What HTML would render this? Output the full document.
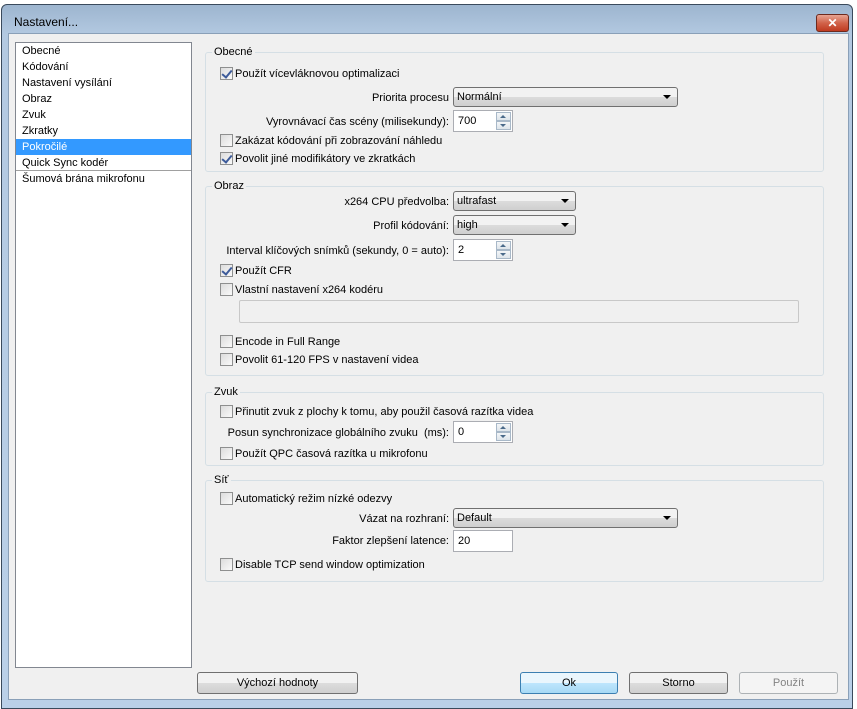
<!DOCTYPE html>
<html><head><meta charset="utf-8"><style>
*{box-sizing:border-box}
body{margin:0;width:857px;height:709px;background:#fff;position:relative;overflow:hidden;font-family:"Liberation Sans",sans-serif;font-size:11px;color:#000}
.a{position:absolute}
.win{left:1px;top:4px;width:852px;height:705px;border:1px solid #3a4a5c;border-radius:6px 6px 0 0;background:linear-gradient(#9db5cf,#b3c9e1 30px,#bad0e8)}
.client{left:8px;top:33px;width:841px;height:667px;background:#f0f0f0;border:1px solid #8aa0b8}
.t{position:absolute;white-space:nowrap;line-height:13px;margin-top:1px}
.r{text-align:right}
.list{left:15px;top:42px;width:177px;height:626px;background:#fff;border:1px solid #828790}
.grp{position:absolute;left:205px;width:619px;border:1px solid #d5dfe5;border-radius:3px}
.gl{position:absolute;background:#f0f0f0;padding:0 2px;left:212px}
.cb{position:absolute;left:220px;width:13px;height:13px;border:1px solid #8e8f8f;background:linear-gradient(135deg,#dcdcdc,#fafafa)}
.cb.c::after{content:"";position:absolute;left:3px;top:0px;width:4px;height:8px;border:solid #3d5b9a;border-width:0 2px 2px 0;transform:rotate(40deg)}
.dd{position:absolute;left:453px;height:20px;border:1px solid #707070;border-radius:3px;background:linear-gradient(#f2f2f2 50%,#dcdcdc 50%,#cfcfcf);padding:3px 3px 0}
.dd::after{content:"";position:absolute;right:6px;top:7px;border:4px solid transparent;border-top:4px solid #000;border-bottom:0}
.sp{position:absolute;left:453px;width:60px;height:22px;border:1px solid #abadb3;background:#fff;padding:4px 4px 0}
.sp i{position:absolute;right:1px;width:15px;height:9px;border:1px solid #a8b8c8;background:linear-gradient(#f4f6f8,#dde4ea)}
.sp i::after{content:"";position:absolute;left:3px;top:2px;border:3px solid transparent}
.sp i.u::after{border-bottom:3px solid #4a6a8a;border-top:0}
.sp i.d::after{border-top:3px solid #4a6a8a;border-bottom:0}
.btn{position:absolute;top:672px;height:22px;border:1px solid #707070;border-radius:3px;background:linear-gradient(#f2f2f2 50%,#dddddd 50%,#cfcfcf);text-align:center;line-height:21px}
</style></head><body>
<div class="a win"></div>
<div class="t" style="left:14px;top:15px;font-size:12px">Nastavení...</div>
<div class="a" style="left:816px;top:14px;width:33px;height:18px;border:1px solid #6d2a1e;border-radius:3px;background:linear-gradient(#e7a493,#d1634a 50%,#bf3b20);color:#fff;text-align:center;font-weight:bold;font-size:12px;line-height:16px">✕</div>
<div class="a client"></div>
<div class="a list"></div>
<div class="a" style="left:16px;top:139px;width:175px;height:16px;background:#3399ff"></div>
<div class="a" style="left:16px;top:170px;width:175px;height:1px;background:#a0a0a0"></div>
<div class="t" style="left:22px;top:44px">Obecné</div>
<div class="t" style="left:22px;top:60px">Kódování</div>
<div class="t" style="left:22px;top:76px">Nastavení vysílání</div>
<div class="t" style="left:22px;top:92px">Obraz</div>
<div class="t" style="left:22px;top:108px">Zvuk</div>
<div class="t" style="left:22px;top:124px">Zkratky</div>
<div class="t" style="left:22px;top:140px;color:#fff">Pokročilé</div>
<div class="t" style="left:22px;top:156px">Quick Sync kodér</div>
<div class="t" style="left:22px;top:172px">Šumová brána mikrofonu</div>

<div class="grp" style="top:52px;height:120px"></div><div class="t gl" style="top:45px">Obecné</div>
<div class="grp" style="top:186px;height:190px"></div><div class="t gl" style="top:179px">Obraz</div>
<div class="grp" style="top:392px;height:74px"></div><div class="t gl" style="top:385px">Zvuk</div>
<div class="grp" style="top:480px;height:102px"></div><div class="t gl" style="top:473px">Síť</div>

<div class="cb c" style="top:67px"></div><div class="t" style="left:235px;top:67px">Použít vícevláknovou optimalizaci</div>
<div class="t r" style="right:408px;top:91px">Priorita procesu</div>
<div class="dd" style="top:87px;width:225px">Normální</div>
<div class="t r" style="right:408px;top:115px">Vyrovnávací čas scény (milisekundy):</div>
<div class="sp" style="top:110px">700<i class="u" style="top:1px"></i><i class="d" style="top:10px"></i></div>
<div class="cb" style="top:134px"></div><div class="t" style="left:235px;top:134px">Zakázat kódování při zobrazování náhledu</div>
<div class="cb c" style="top:152px"></div><div class="t" style="left:235px;top:152px">Povolit jiné modifikátory ve zkratkách</div>

<div class="t r" style="right:408px;top:195px">x264 CPU předvolba:</div>
<div class="dd" style="top:191px;width:123px">ultrafast</div>
<div class="t r" style="right:408px;top:219px">Profil kódování:</div>
<div class="dd" style="top:215px;width:123px">high</div>
<div class="t r" style="right:408px;top:244px">Interval klíčových snímků (sekundy, 0 = auto):</div>
<div class="sp" style="top:239px">2<i class="u" style="top:1px"></i><i class="d" style="top:10px"></i></div>
<div class="cb c" style="top:264px"></div><div class="t" style="left:235px;top:264px">Použít CFR</div>
<div class="cb" style="top:283px"></div><div class="t" style="left:235px;top:283px">Vlastní nastavení x264 kodéru</div>
<div class="a" style="left:239px;top:300px;width:560px;height:23px;border:1px solid #c8c8c8;background:#f0f0f0;border-radius:2px"></div>
<div class="cb" style="top:335px"></div><div class="t" style="left:235px;top:335px">Encode in Full Range</div>
<div class="cb" style="top:353px"></div><div class="t" style="left:235px;top:353px">Povolit 61-120 FPS v nastavení videa</div>

<div class="cb" style="top:405px"></div><div class="t" style="left:235px;top:405px">Přinutit zvuk z plochy k tomu, aby použil časová razítka videa</div>
<div class="t r" style="right:408px;top:426px">Posun synchronizace globálního zvuku&nbsp; (ms):</div>
<div class="sp" style="top:421px">0<i class="u" style="top:1px"></i><i class="d" style="top:10px"></i></div>
<div class="cb" style="top:447px"></div><div class="t" style="left:235px;top:447px">Použít QPC časová razítka u mikrofonu</div>

<div class="cb" style="top:492px"></div><div class="t" style="left:235px;top:492px">Automatický režim nízké odezvy</div>
<div class="t r" style="right:408px;top:512px">Vázat na rozhraní:</div>
<div class="dd" style="top:508px;width:225px">Default</div>
<div class="t r" style="right:408px;top:534px">Faktor zlepšení latence:</div>
<div class="sp" style="top:530px">20</div>
<div class="cb" style="top:558px"></div><div class="t" style="left:235px;top:558px">Disable TCP send window optimization</div>

<div class="btn" style="left:197px;width:161px">Výchozí hodnoty</div>
<div class="btn" style="left:520px;width:98px;border-color:#3c7fb1;background:linear-gradient(#eaf6fd 50%,#bee6fd 50%,#a7d9f5)">Ok</div>
<div class="btn" style="left:629px;width:99px">Storno</div>
<div class="btn" style="left:739px;width:99px;border-color:#adb2b5;background:#f4f4f4;color:#838383">Použít</div>
</body></html>
